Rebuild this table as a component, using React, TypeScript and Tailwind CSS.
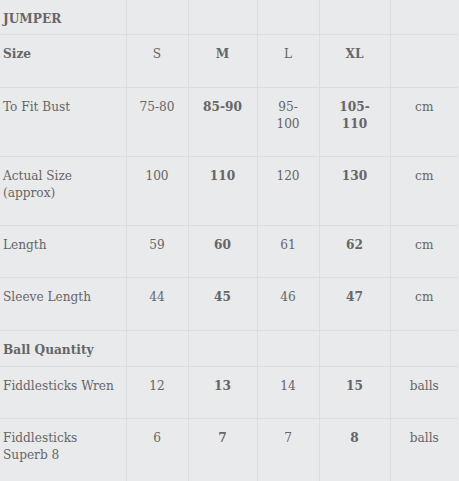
import React from "react";

type Row = {
  label: React.ReactNode;
  cells: React.ReactNode[];
  unit?: string;
  h: string;
  header?: boolean;
  labelBold?: boolean;
};

const rows: Row[] = [
  { label: "JUMPER", cells: ["", "", "", ""], unit: "", h: "h-[34px]", header: true },
  { label: "Size", cells: ["S", "M", "L", "XL"], unit: "", h: "h-[53px]", labelBold: true },
  {
    label: "To Fit Bust",
    cells: [
      "75-80",
      "85-90",
      <>
        95-
        <br />
        100
      </>,
      <>
        105-
        <br />
        110
      </>,
    ],
    unit: "cm",
    h: "h-[69px]",
  },
  {
    label: (
      <>
        Actual Size
        <br />
        (approx)
      </>
    ),
    cells: ["100", "110", "120", "130"],
    unit: "cm",
    h: "h-[69px]",
  },
  { label: "Length", cells: ["59", "60", "61", "62"], unit: "cm", h: "h-[52px]" },
  { label: "Sleeve Length", cells: ["44", "45", "46", "47"], unit: "cm", h: "h-[53px]" },
  { label: "Ball Quantity", cells: ["", "", "", ""], unit: "", h: "h-[36px]", header: true },
  { label: "Fiddlesticks Wren", cells: ["12", "13", "14", "15"], unit: "balls", h: "h-[52px]" },
  {
    label: (
      <>
        Fiddlesticks
        <br />
        Superb 8
      </>
    ),
    cells: ["6", "7", "7", "8"],
    unit: "balls",
    h: "h-[70px]",
  },
];

export default function App() {
  return (
    <div
      className="w-[459px] h-[481px] overflow-hidden bg-[#e9eaec] text-[#666666] text-[13.5px] leading-[17px]"
      style={{ fontFamily: '"DejaVu Serif Condensed", "DejaVu Serif", serif' }}
    >
      <table className="table-fixed border-collapse w-[458px]">
        <colgroup>
          <col className="w-[126px]" />
          <col className="w-[62px]" />
          <col className="w-[69px]" />
          <col className="w-[62px]" />
          <col className="w-[71px]" />
          <col className="w-[68px]" />
        </colgroup>
        <tbody>
          {rows.map((r, i) => (
            <tr key={i} className={`${r.h} border-b border-[#dcdddf]`}>
              <td
                className={`align-top pt-[10px] pl-[3px] pr-0 whitespace-nowrap border-r border-[#dcdddf] ${
                  r.header || r.labelBold ? "font-bold" : ""
                }`}
              >
                {r.label}
              </td>
              {r.cells.map((c, j) => (
                <td
                  key={j}
                  className={`align-top pt-[10px] px-0 whitespace-nowrap text-center border-r border-[#dcdddf] ${
                    j % 2 === 1 ? "font-bold" : ""
                  }`}
                >
                  {c}
                </td>
              ))}
              <td className="align-top pt-[10px] text-center">{r.unit}</td>
            </tr>
          ))}
        </tbody>
      </table>
    </div>
  );
}
